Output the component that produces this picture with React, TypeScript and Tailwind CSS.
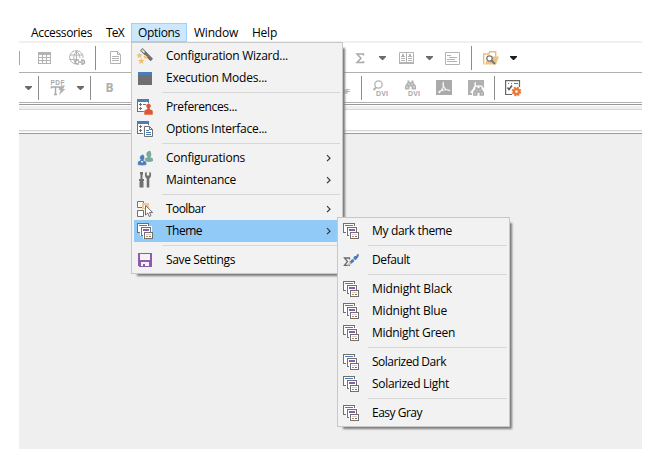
import { useLayoutEffect, useRef, useState } from "react";
import type { ReactNode } from "react";

const FONT = "font-['Open_Sans','Noto_Sans',sans-serif] text-[12px] leading-none text-black";

/* Label tracked so that it fills the given width. */
function Label({ text, width }: { text: string; width: number }) {
  const ref = useRef<HTMLSpanElement>(null);
  const [spacing, setSpacing] = useState(0);
  useLayoutEffect(() => {
    if (ref.current) {
      const natural = ref.current.getBoundingClientRect().width;
      setSpacing((width - natural) / text.length);
    }
  }, [text, width]);
  return (
    <span ref={ref} className="whitespace-nowrap" style={{ letterSpacing: spacing }}>
      {text}
    </span>
  );
}

function Icon({ children, className = "", crisp }: { children: ReactNode; className?: string; crisp?: boolean }) {
  return (
    <svg
      viewBox="0 0 16 16"
      shapeRendering={crisp ? "crispEdges" : "auto"}
      className={"block h-4 w-4 shrink-0 overflow-visible " + className}
    >
      {children}
    </svg>
  );
}

const G = "#707070";
const L = "#b3b3b3";

function ThemeIcon() {
  return (
    <Icon crisp>
      <path d="M.5.5h11v9H.5z" fill="#fff" stroke={G} />
      <path d="M2 2h8v1H2z" fill="#4a7ebb" />
      <path d="M3 3h12v10H3z" fill="#fff" />
      <path d="M4.500 4.500h9v8h-9z" fill="#fff" stroke={G} />
      <path d="M6 6h6v2H6z" fill="#8e5bb0" />
      <path d="M6 9h10v7H6z" fill="#fff" />
      <path d="M7.500 9.500h8v6h-8z" fill="#fff" stroke={G} />
      <path d="M9 11h5v1H9z" fill="#d0d0d0" />
      <path d="M9 13h2v1H9z" fill="#e57a3a" />
      <path d="M12 13h2v1h-2z" fill={G} />
    </Icon>
  );
}

function WizardIcon() {
  return (
    <Icon>
      <path d="M4.300 1.300 14.800 12" stroke={G} strokeWidth="3.400" />
      <path d="M4.800 1.800 7.500 4.600" stroke="#f4f4f4" strokeWidth="1.500" />
      <path d="m2.500 4.200.8 2 2.400.2-1.800 1.500.6 2.300-2-1.200-2 1.200.5-2.300L-.7 6.400l2.400-.2zM4.300 9.700l.9 2.200 2.500.2-1.900 1.600.6 2.400-2.100-1.300-2.100 1.300.6-2.400-1.900-1.600 2.500-.2zM8.500 6.500l.7 1.500 1.700.1-1.300 1.100.4 1.700-1.500-.9-1.500.9.400-1.700-1.300-1.100 1.700-.1z" fill="#f0bf78" />
    </Icon>
  );
}

function ModesIcon() {
  return (
    <Icon crisp>
      <path d="M1 2h14v13H1z" fill="#6f6f6f" />
      <path d="M1 2h14v3H1z" fill="#4a7ebb" />
    </Icon>
  );
}

function FormBase() {
  return (
    <g shapeRendering="crispEdges">
      <path d="M.5.500h11v12H.5z" fill="#fff" stroke={G} />
      <path d="M0 0h12v3H0z" fill="#4a7ebb" />
      <path d="M2 5h3v1H2zM3 4h1v3H3zM6 5h3v1H6zM2 9h3v1H2zM3 8h1v3H3z" fill={G} />
    </g>
  );
}

function PreferencesIcon() {
  return (
    <Icon>
      <FormBase />
      <path d="M7 16v-3.500Q7 10.500 9 10.500L10 10V9Q8.500 7.500 9 6t2.500-1.500T14 6t-1 3v1l1 .5q2 0 2 2V16z" fill="#dd5533" stroke="#f2f2f2" strokeWidth=".6" />
    </Icon>
  );
}

function InterfaceIcon() {
  return (
    <Icon>
      <FormBase />
      <path d="M6 4h7l4 4v8H6z" fill="#f2f2f2" />
      <path d="M7.500 5.500h5l3 3v7h-8z" fill="#fff" stroke={G} />
      <path d="M12.500 5.500v3h3" fill="none" stroke={G} />
      <path d="M9 9h3v1H9zM9 11h5v1H9zM9 13h5v1H9z" fill="#4a7ebb" />
    </Icon>
  );
}

function UsersIcon() {
  return (
    <Icon>
      <path d="M8 11V9.500Q8 7.500 10 7.500l.7-.5Q9 5.500 9.300 3.700T11.800 1t2.400 2.700T13 7l.7.500Q16 7.500 16 9.500V11q-4 2-8 0z" fill="#79aa9b" />
      <path d="M.5 15v-2q0-2.300 2-2.300l1-.7Q2.300 8.500 2.600 7t2.400-2.500T7.600 7t-1.100 3l1 .7q2.200 0 2.200 2.300v2q-4.500 1.500-9.200 0z" fill="#4a7ebb" stroke="#f2f2f2" strokeWidth=".6" />
      <path d="m3.800 11 1.300 2.300L6.400 11z" fill="#f2f2f2" />
    </Icon>
  );
}

function ToolsIcon() {
  return (
    <Icon>
      <path d="M3 0h3v2l-.5 1v4H7v2H6l.5 1v5.500h-4V10L3 9H2V7h1.500V3L3 2z" fill="#707070" />
      <path d="M8 .7Q7.500 5.500 9.700 6.500v9h2.600v-9Q14.500 5.500 14 .7L12.300 0v3.500H9.700V0z" fill="#707070" />
    </Icon>
  );
}

function ToolbarIcon() {
  return (
    <Icon>
      <path d="M.5.5h6v6h-6zM.5 9.500h6v6h-6z" fill="#fff" stroke={G} />
      <path d="M5 2h7v6H5z" fill="#efc98c" />
      <path d="M7 4h2v3H7z" fill="#fff" />
      <path d="M8.500 4.500v9.500l2.200-2 1.500 3.500 1.800-.8-1.500-3.200h3.200z" fill="#fff" stroke={G} />
    </Icon>
  );
}

function SaveIcon() {
  return (
    <Icon crisp>
      <path d="M1 1h14v14H2v-1H1z" fill="#8e5bb0" />
      <path d="M3 2h10v6H3zM4 10h8v4H4z" fill="#f3f3f3" />
      <path d="M6 12h2v3H6z" fill="#8e5bb0" />
    </Icon>
  );
}

function DefaultIcon() {
  return (
    <Icon>
      <path d="M6.500 7.500V6h-5l3 3.500-3 3.800h5V11.500" fill="none" stroke="#6a6a6a" strokeWidth="1.300" />
      <path d="m4 14.800 2.500-5 2 2z" fill="#edbd78" />
      <path d="m6.500 9.700 2.800-2.700q2 .3 2 2.200L8.500 11.800z" fill="#4a7ebb" />
      <path d="m10.300 5.500 1.400-1.500h1.500L14.500 1.700 16 2.800l-1 2.700-2.500 2.700q-2-.5-2.200-2.700z" fill="#4a7ebb" />
    </Icon>
  );
}

function Row({ icon, text, width, arrow, active }: { icon: ReactNode; text: string; width: number; arrow?: boolean; active?: boolean }) {
  return (
    <div className={"flex h-[22px] items-center pl-[3px] " + (active ? "bg-[#91c9f7]" : "")}>
      {icon}
      <div className="ml-[13px] flex-1">
        <Label text={text} width={width} />
      </div>
      {arrow && (
        <svg viewBox="0 0 5 8" className="mr-[9px] h-2 w-[5px]">
          <path d="M1 1.200 4 4.200 1 7.200" fill="none" stroke="#333" strokeWidth="1.200" />
        </svg>
      )}
    </div>
  );
}

function Divider() {
  return <div className="mt-[3px] mb-[3px] ml-7 h-px bg-[#d7d7d7]" />;
}

function Sep({ className }: { className: string }) {
  return <div className={"-mt-1 h-6 w-px shrink-0 bg-[#8c8c8c] " + className} />;
}

function Caret({ className, dark }: { className: string; dark?: boolean }) {
  return (
    <svg viewBox="0 0 7 4" className={"mt-1.5 h-1 w-[7px] shrink-0 " + className}>
      <path d="M0 0h7v1L4 4H3L0 1z" fill={dark ? "#1e1e1e" : "#6b6b6b"} />
    </svg>
  );
}

/* Pair of barrels with the two eyepieces on top. */
function Binoculars({ color }: { color: string }) {
  return (
    <>
      <path d="M2.500 0h2v1.500h2V0h2v2L11 5.500V9H6.500V6h-2v3H0V5.500L2.500 2z" fill={color} />
      <path d="M2 5.500v2M9 5.500v2M4 3v1.500M7 3v1.500" stroke="#f4f4f4" strokeWidth=".8" />
    </>
  );
}

function SmallText({ x, y, size, width, label }: { x: number; y: number; size: number; width: number; label: string }) {
  return (
    <text x={x} y={y} fontSize={size} textLength={width} fill="#a8a8a8" fontWeight="bold" fontFamily="Liberation Sans, sans-serif">
      {label}
    </text>
  );
}

function AcrobatCurve() {
  return <path d="M2.500 13Q5 12 7 7.500 8 4 7.300 2.500q-1 1.500.7 4.500 2 3.500 6 3.500Q10 8.700 2.500 11.500" fill="none" stroke="#f7f7f7" strokeWidth="1.100" />;
}

function TopToolbar() {
  return (
    <div className="flex h-[30px] items-start border-b border-[#b0b0b0] pt-[7px]">
      <div className="mt-px h-3.5 w-px bg-[#a6a6a6]" />
      <Icon className="ml-[17px]" crisp>
        <path d="M1.500 2.500h12v11h-12zM1 7.500h13M1 10.500h13M5.500 5v9M9.500 5v9" fill="none" stroke={L} />
        <path d="M1 2h13v3H1z" fill={L} />
      </Icon>
      <Icon className="ml-4">
        <path d="M14 8a6.700 6.700 0 1 0-7 6M1 5h13M.5 9.500H8M7.500 1Q2.500 7 6.500 14M7.500 1Q11 4 11 8M7.500 1v9" fill="none" stroke={L} />
        <path d="M10 10H8.500a2 2 0 0 0 0 4H10M12 10h1.500a2 2 0 0 1 0 4H12M9 12h5" fill="none" stroke="#aaa" strokeWidth="1.400" />
      </Icon>
      <Sep className="ml-2.5" />
      <Icon className="ml-3">
        <path d="M2.500 1.500h7l3 3v9h-10zM9.500 1.500v3h3M4 6.500h7M4 8.500h7M4 10.500h7" fill="none" stroke={L} />
      </Icon>
      <Icon className="ml-[228px]">
        <path d="M11.500 5.500V4H5l4 4.200-4 4.300h6.500V11" fill="none" stroke="#aaa" strokeWidth="1.500" />
      </Icon>
      <Caret className="ml-[11px]" />
      <Icon className="ml-[13px]">
        <path d="M.5 2.500h14v11H.5zM7.500 2v12M2 8.500h4M2 10.500h4M9 8.500h4M9 10.500h4" fill="none" stroke={L} />
        <path d="M3 4h2v2H3zM2 6h4v1H2zM10 4h2v2h-2zM9 6h4v1H9zM0 12h15v2H0z" fill={L} />
      </Icon>
      <Caret className="ml-[11px]" />
      <Icon className="ml-[11px]">
        <path d="M1.500 2.500h14v12h-14z" fill="none" stroke={L} />
        <path d="M3 5h4v1H3zM5 7h8v1H5zM3 9h8v1H3zM3 11h10v1H3z" fill={L} />
      </Icon>
      <Sep className="ml-[11px]" />
      <Icon className="ml-[11px]">
        <path d="M.7 14.500V4h5l1-2.200h6V7" fill="#fff" stroke="#e9bd77" strokeWidth="1.400" />
        <path d="M2 14.500 5 6.500h11l-3 8z" fill="#efc37f" />
        <path d="m8.500 10.500 3.500 3.500" stroke="#777" strokeWidth="1.800" />
        <circle cx="6.500" cy="8.500" r="2.700" fill="#fff" stroke="#777" strokeWidth="1.300" />
      </Icon>
      <Caret className="ml-[11px]" dark />
    </div>
  );
}

function BottomToolbar() {
  return (
    <div className="flex h-[30px] items-start border-b border-[#b0b0b0] pt-[7px]">
      <Caret className="ml-1.5" />
      <Sep className="ml-1.5" />
      <Icon className="ml-[11px]">
        <SmallText x={0.5} y={4.8} size={6.5} width={14} label="PDF" />
        <path d="M1.500 8.500V7h8v1.500M5.500 7v8M4 14.500h3" fill="none" stroke="#aaa" strokeWidth="1.500" />
        <path d="M11 5.500h4l-2 3.500h2.500L9 15l1.500-5H8.500z" fill={L} />
      </Icon>
      <Caret className="ml-[11px]" />
      <Sep className="ml-1.5" />
      <Icon className="ml-2.5">
        <text x="4.500" y="12" fontSize="12" fill="#adadad" fontWeight="bold" fontFamily="Open Sans, sans-serif">B</text>
      </Icon>
      <Icon className="ml-[218px]">
        <SmallText x={1} y={14.3} size={7} width={14} label="PDF" />
      </Icon>
      <Sep className="ml-2.5" />
      <Icon className="ml-[11px]">
        <circle cx="5.500" cy="4.500" r="3.700" fill="none" stroke={L} strokeWidth="1.300" />
        <path d="M3 7.500.5 10" stroke={L} strokeWidth="2" />
        <SmallText x={3} y={15.8} size={7} width={12} label="DVI" />
      </Icon>
      <Icon className="ml-[15px]">
        <g transform="translate(1 .5)"><Binoculars color={L} /></g>
        <SmallText x={4} y={15.8} size={7} width={12} label="DVI" />
      </Icon>
      <Icon className="ml-4">
        <path d="M0 0h16v15H0z" fill="#aaa" />
        <AcrobatCurve />
      </Icon>
      <Icon className="ml-4">
        <path d="M0 0h16v15H0z" fill="#b0b0b0" />
        <AcrobatCurve />
        <path d="M6.500 5.500h7.500l3 5V17H4v-6.500z" fill="#fff" />
        <g transform="translate(5 6.800)"><Binoculars color="#aaa" /></g>
      </Icon>
      <Sep className="ml-2.5" />
      <Icon className="ml-2.5">
        <path d="M14.500 7V.6H.6v13.900H7" fill="#fff" stroke="#666" strokeWidth="1.200" />
        <path d="M3 3h1v1H3zM6 3h1v1H6zM9 3h4v1H9z" fill="#777" />
        <path d="m2.500 7.500 1.500 2 3-4" fill="none" stroke="#555" strokeWidth="1.500" />
        <circle cx="11.500" cy="11.500" r="4" fill="none" stroke="#e9793a" strokeWidth="1.500" strokeDasharray="1.900 1.240" />
        <circle cx="11.500" cy="11.500" r="2.500" fill="#fff" stroke="#e9793a" strokeWidth="2.400" />
      </Icon>
    </div>
  );
}

function TitleItem({ text, width, className, active }: { text: string; width: number; className: string; active?: boolean }) {
  return (
    <div className={"flex shrink-0 items-center " + (active ? "border border-[#99d1ff] bg-[#cce8ff] pt-px " : "pt-0.5 ") + className}>
      <Label text={text} width={width} />
    </div>
  );
}

const MENU_BOX = "absolute border border-[#c8c8c8] bg-[#f2f2f2] p-[2px] shadow-[4px_4px_2px_-2px_#7b7b7b]";

export default function App() {
  return (
    <div className={"relative h-[466px] w-[656px] overflow-hidden bg-white " + FONT}>
      <div className="ml-[19px] flex h-[449px] w-[623px] flex-col pt-[23px]">
        <div className="flex h-5 border-b-2 border-[#f0f0f0]">
          <TitleItem text="Accessories" width={61} className="ml-3 w-[61px]" />
          <TitleItem text="TeX" width={18} className="ml-3.5 w-[18px]" />
          <TitleItem text="Options" width={42} className="ml-[7px] h-[19px] w-14 pl-1.5" active />
          <TitleItem text="Window" width={44} className="ml-[7px] w-11" />
          <TitleItem text="Help" width={25} className="ml-3.5 w-[25px]" />
        </div>
        <TopToolbar />
        <BottomToolbar />
        <div className="mt-px h-px bg-[#999]" />
        <div className="mt-px h-[3px] bg-[#efefef]" />
        <div className="h-[22px] border-y border-[#d6d6d6] bg-white" />
        <div className="h-px bg-[#f2f2f2]" />
        <div className="mt-px h-px bg-[#999]" />
        <div className="flex-1 bg-[#efefef]" />
      </div>

      <div className={MENU_BOX + " left-[131px] top-[42px] h-[232px] w-[212px]"}>
        <Row icon={<WizardIcon />} text="Configuration Wizard..." width={122} />
        <Row icon={<ModesIcon />} text="Execution Modes..." width={101} />
        <Divider />
        <Row icon={<PreferencesIcon />} text="Preferences..." width={71} />
        <Row icon={<InterfaceIcon />} text="Options Interface..." width={101} />
        <Divider />
        <Row icon={<UsersIcon />} text="Configurations" width={79} arrow />
        <Row icon={<ToolsIcon />} text="Maintenance" width={70} arrow />
        <Divider />
        <Row icon={<ToolbarIcon />} text="Toolbar" width={39} arrow />
        <Row icon={<ThemeIcon />} text="Theme" width={36} arrow active />
        <Divider />
        <Row icon={<SaveIcon />} text="Save Settings" width={69} />
      </div>

      <div className={MENU_BOX + " left-[337px] top-[217px] h-[210px] w-[173px]"}>
        <Row icon={<ThemeIcon />} text="My dark theme" width={80} />
        <Divider />
        <Row icon={<DefaultIcon />} text="Default" width={38} />
        <Divider />
        <Row icon={<ThemeIcon />} text="Midnight Black" width={80} />
        <Row icon={<ThemeIcon />} text="Midnight Blue" width={75} />
        <Row icon={<ThemeIcon />} text="Midnight Green" width={83} />
        <Divider />
        <Row icon={<ThemeIcon />} text="Solarized Dark" width={74} />
        <Row icon={<ThemeIcon />} text="Solarized Light" width={77} />
        <Divider />
        <Row icon={<ThemeIcon />} text="Easy Gray" width={50} />
      </div>
    </div>
  );
}
